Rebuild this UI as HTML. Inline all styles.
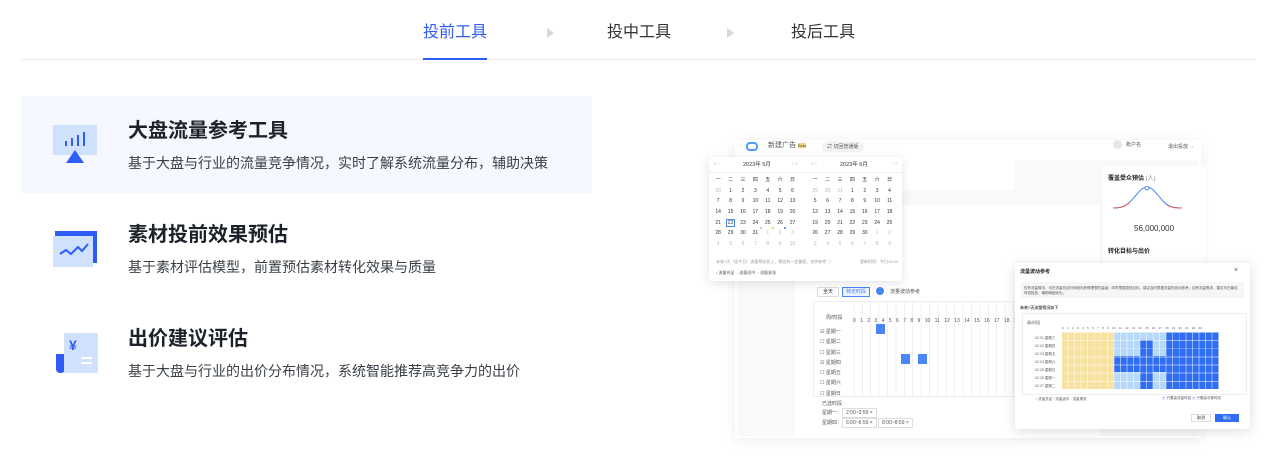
<!DOCTYPE html>
<html><head><meta charset="utf-8"><style>
*{margin:0;padding:0;box-sizing:border-box}
body{width:1268px;height:461px;background:#fff;position:relative;overflow:hidden;font-family:"Liberation Sans","Noto Sans CJK SC",sans-serif;color:#1f2329}
.a{position:absolute}
.tab{position:absolute;top:22px;font-size:16px;line-height:22px;color:#333}
.arrow{position:absolute;top:28px;width:0;height:0;border-left:7px solid #d6d8dc;border-top:5px solid transparent;border-bottom:5px solid transparent}
.t{position:absolute;left:128px;font-size:20px;font-weight:bold;color:#1d2129;line-height:28px}
.d{position:absolute;left:128px;font-size:14px;color:#3a3f47;line-height:20px}
.sm{font-size:5px;color:#555;line-height:6px}
.cal{position:absolute;font-size:5px;color:#333;display:grid;grid-template-columns:repeat(7,12.4px);grid-auto-rows:10.7px;text-align:center;line-height:6px}
.cal .g{color:#bbb}
</style></head><body>
<div class="tab" style="left:423px;color:#2f5cf5">投前工具</div>
<div class="arrow" style="left:547px"></div>
<div class="tab" style="left:607px">投中工具</div>
<div class="arrow" style="left:727px"></div>
<div class="tab" style="left:791px">投后工具</div>
<div class="a" style="left:20px;top:59px;width:1236px;height:1px;background:#eceef2"></div>
<div class="a" style="left:423px;top:58px;width:64px;height:2px;background:#2f5cf5"></div>

<div class="a" style="left:21px;top:96px;width:571px;height:97px;background:#f5f8fe"></div>
<div class="a" style="left:53px;top:125px;width:44px;height:30px;background:#cfe1fd"></div>
<div class="a" style="left:65px;top:141px;width:2px;height:5px;background:#2f5cf5"></div>
<div class="a" style="left:71px;top:138px;width:2px;height:8px;background:#2f5cf5"></div>
<div class="a" style="left:77px;top:135px;width:2px;height:11px;background:#2f5cf5"></div>
<div class="a" style="left:83px;top:132px;width:2px;height:14px;background:#2f5cf5"></div>
<div class="a" style="left:66px;top:150px;width:0;height:0;border-left:9px solid transparent;border-right:9px solid transparent;border-bottom:13px solid #2f5cf5"></div>
<div class="t" style="top:117px">大盘流量参考工具</div>
<div class="d" style="top:153px">基于大盘与行业的流量竞争情况，实时了解系统流量分布，辅助决策</div>
<div class="a" style="left:55px;top:231px;width:42px;height:32px;background:#2f5cf5"></div>
<div class="a" style="left:53px;top:236px;width:40px;height:31px;background:#cfe1fd"></div>
<svg class="a" style="left:58px;top:242px" width="32" height="16"><polyline points="2,12 8,8 13,12 20,5 24,9 30,2" fill="none" stroke="#2f5cf5" stroke-width="2"/></svg>
<div class="t" style="top:221px">素材投前效果预估</div>
<div class="d" style="top:257px">基于素材评估模型，前置预估素材转化效果与质量</div>
<div class="a" style="left:56px;top:354px;width:9px;height:19px;background:#2f5cf5;border-radius:0 0 4px 4px"></div>
<div class="a" style="left:64px;top:333px;width:34px;height:40px;background:#cfe1fd;border-radius:0 2px 2px 0"></div>
<div class="a" style="left:69px;top:337px;font-size:14px;font-weight:bold;color:#2f5cf5;line-height:16px">¥</div>
<div class="a" style="left:81px;top:357px;width:11px;height:2px;background:#fff"></div>
<div class="a" style="left:81px;top:362px;width:11px;height:2px;background:#fff"></div>
<div class="t" style="top:325px">出价建议评估</div>
<div class="d" style="top:361px">基于大盘与行业的出价分布情况，系统智能推荐高竞争力的出价</div>

<div class="a" style="left:735px;top:140px;width:466px;height:298px;background:#fff;box-shadow:0 2px 12px rgba(0,0,0,.08)"></div>
<div class="a" style="left:737px;top:160px;width:462px;height:276px;background:#f8f9fa"></div>
<div class="a" style="left:795px;top:205px;width:305px;height:231px;background:#fff"></div>
<div class="a" style="left:900px;top:160px;width:115px;height:30px;background:#fff"></div>
<div class="a" style="left:746px;top:142px;width:12px;height:9px;border:2px solid #4d9ef5;border-radius:4px"></div>
<div class="a sm" style="left:768px;top:143px;font-size:7px">新建广告 <span style="background:#f5d67a;font-size:4px">Beta</span></div>
<div class="a sm" style="left:822px;top:141px;width:42px;height:11px;background:#f2f3f5;border-radius:5px;padding:3px 5px">⇄ 切回普通版</div>
<div class="a" style="left:1113px;top:140px;width:9px;height:9px;border-radius:50%;background:#e5e6eb"></div>
<div class="a sm" style="left:1126px;top:142px">账户名</div>
<div class="a sm" style="left:1168px;top:144px">退出投放 →</div>
<div class="a" style="left:1103px;top:166px;width:103px;height:100px;background:#fff;border-radius:3px"></div>
<div class="a" style="left:1108px;top:173px;font-size:6px;color:#222;font-weight:bold">覆盖受众预估 <span style="font-weight:normal;color:#888">(人)</span></div>
<svg class="a" style="left:1112px;top:186px" width="72" height="24"><path d="M1,22 C15,22 18,16 25,8 C28,4 32,1 35,1 C40,1 45,8 50,14 C55,20 60,22 70,22" fill="none" stroke="#4a86f5" stroke-width="1"/><path d="M1,22 C10,22 14,20 18,16" fill="none" stroke="#e75a4d" stroke-width="1"/><path d="M55,19 C60,22 64,22 70,22" fill="none" stroke="#e75a4d" stroke-width="1"/><circle cx="35" cy="2" r="2" fill="#fff" stroke="#4a86f5"/></svg>
<div class="a" style="left:1134px;top:224px;font-size:8px;color:#333">56,000,000</div>
<div class="a" style="left:1108px;top:246px;font-size:6px;color:#222;font-weight:bold">转化目标与出价</div>
<div class="a" style="left:817px;top:287px;width:22px;height:10px;border:1px solid #ddd;font-size:5px;text-align:center;line-height:8px">全天</div>
<div class="a" style="left:842px;top:287px;width:28px;height:10px;border:1px solid #4a86f5;background:#eef4ff;font-size:5px;text-align:center;line-height:8px;color:#4a86f5">特定时段</div>
<div class="a" style="left:876px;top:287px;width:8px;height:8px;border-radius:50%;background:#4a86f5"></div>
<div class="a sm" style="left:890px;top:289px">流量波动参考</div>
<div class="a" style="left:813px;top:301px;width:210px;height:96px;border:1px solid #eee;background:repeating-linear-gradient(90deg,transparent 0 7.4px,#f0f0f0 7.4px 8.4px) 32px 0/178px 100% no-repeat,#fff"></div>
<div class="a sm" style="left:826px;top:315px">周/时段</div>
<div class="a sm" style="left:853px;top:318px;word-spacing:3px">0 1 2 3 4 5 6 7 8 9 10 11 12 13 14 15 16 17 18 19</div>
<div class="a sm" style="left:820px;top:327px;line-height:10.3px">☑ 星期一<br>☐ 星期二<br>☐ 星期三<br>☑ 星期四<br>☐ 星期五<br>☐ 星期六<br>☐ 星期日</div>
<div class="a" style="left:876px;top:324px;width:9px;height:10px;background:#4a86f5"></div>
<div class="a" style="left:901px;top:354px;width:9px;height:10px;background:#4a86f5"></div>
<div class="a" style="left:918px;top:354px;width:9px;height:10px;background:#4a86f5"></div>
<div class="a sm" style="left:822px;top:401px">已选时段</div>
<div class="a sm" style="left:822px;top:410px">星期一：<span style="border:1px solid #ddd;padding:1px 3px">2:00~3:59 ×</span></div>
<div class="a sm" style="left:822px;top:420px">星期四：<span style="border:1px solid #ddd;padding:1px 3px">6:00~6:59 ×</span> <span style="border:1px solid #ddd;padding:1px 3px">8:00~8:59 ×</span></div>
<div class="a" style="left:709px;top:157px;width:193px;height:124px;background:#fff;border-radius:3px;box-shadow:0 2px 10px rgba(0,0,0,.12)"></div>
<div class="a" style="left:709px;top:172px;width:193px;height:1px;background:#f0f0f0"></div>
<div class="a" style="left:743px;top:160px;font-size:5.5px;color:#333">2023年 5月</div>
<div class="a" style="left:840px;top:160px;font-size:5.5px;color:#333">2023年 6月</div>
<div class="a" style="left:714px;top:161px;font-size:5px;color:#bbb">« ‹</div>
<div class="a" style="left:792px;top:161px;font-size:5px;color:#bbb">› »</div>
<div class="a" style="left:811px;top:161px;font-size:5px;color:#bbb">« ‹</div>
<div class="a" style="left:892px;top:161px;font-size:5px;color:#bbb">› »</div>
<div class="cal" style="left:712px;top:177px">
<span>一</span><span>二</span><span>三</span><span>四</span><span>五</span><span>六</span><span>日</span>
<span class="g">30</span><span>1</span><span>2</span><span>3</span><span>4</span><span>5</span><span>6</span>
<span>7</span><span>8</span><span>9</span><span>10</span><span>11</span><span>12</span><span>13</span>
<span>14</span><span>15</span><span>16</span><span>17</span><span>18</span><span>19</span><span>20</span>
<span>21</span><span><span style="outline:1px solid #4a86f5;padding:0 1px">22</span></span><span>23</span><span>24</span><span>25</span><span>26</span><span>27</span>
<span>28</span><span>29</span><span>30</span><span>31</span><span class="g">1</span><span class="g">2</span><span class="g">3</span>
<span class="g">4</span><span class="g">5</span><span class="g">6</span><span class="g">7</span><span class="g">8</span><span class="g">9</span><span class="g">10</span>
</div>
<div class="cal" style="left:809px;top:177px">
<span>一</span><span>二</span><span>三</span><span>四</span><span>五</span><span>六</span><span>日</span>
<span class="g">29</span><span class="g">30</span><span class="g">31</span><span>1</span><span>2</span><span>3</span><span>4</span>
<span>5</span><span>6</span><span>7</span><span>8</span><span>9</span><span>10</span><span>11</span>
<span>12</span><span>13</span><span>14</span><span>15</span><span>16</span><span>17</span><span>18</span>
<span>19</span><span>20</span><span>21</span><span>22</span><span>23</span><span>24</span><span>25</span>
<span>26</span><span>27</span><span>28</span><span>29</span><span>30</span><span class="g">1</span><span class="g">2</span>
<span class="g">3</span><span class="g">4</span><span class="g">5</span><span class="g">6</span><span class="g">7</span><span class="g">8</span><span class="g">9</span>
</div>
<div class="a" style="left:760px;top:227px;width:2px;height:2px;border-radius:50%;background:#9cc4f8"></div>
<div class="a" style="left:772px;top:227px;width:2px;height:2px;border-radius:50%;background:#f5c542"></div>
<div class="a" style="left:784px;top:227px;width:2px;height:2px;border-radius:50%;background:#2f6df3"></div>
<div class="a sm" style="left:716px;top:259px;color:#999;font-size:4px">未来7天（含今日）流量预估如上，预估有一定偏差，仅供参考 ⓘ</div>
<div class="a sm" style="left:860px;top:259px;color:#999;font-size:4px">更新时间：今日10:00</div>
<div class="a sm" style="left:716px;top:270px;font-size:4px"><span style="color:#4a86f5">•</span> 流量充足 &nbsp;<span style="color:#9cc4f8">•</span> 流量适中 &nbsp;<span style="color:#f5c542">•</span> 流量紧张</div>
<div class="a" style="left:1015px;top:263px;width:235px;height:166px;background:#fff;border-radius:3px;box-shadow:0 2px 12px rgba(0,0,0,.14)"></div>
<div class="a sm" style="left:1020px;top:269px;font-weight:bold;color:#222">流量波动参考</div>
<div class="a sm" style="left:1234px;top:268px;font-size:7px">×</div>
<div class="a" style="left:1021px;top:282px;width:223px;height:16px;background:#f5f6f8"></div>
<div class="a sm" style="left:1024px;top:286px;width:215px;font-size:3.5px;line-height:5px;color:#555;overflow:hidden;height:11px">仅有流量情况，可在流量充足时间段内获得理想的量级；同时根据投放目标，建议及时根据流量的波动参考；如有流量需求，建议可在最佳时段投放，辅助精细优化。</div>
<div class="a sm" style="left:1020px;top:305px;font-size:4px;font-weight:bold">未来7天流量情况如下</div>
<div class="a" style="left:1022px;top:313px;width:225px;height:82px;border:1px solid #eee"></div>
<div class="a sm" style="left:1027px;top:320px;font-size:4px">周/时段</div>
<div class="a sm" style="left:1035px;top:334px;font-size:3.5px;line-height:8px">02-21 星期三<br>02-22 星期四<br>02-23 星期五<br>02-24 星期六<br>02-25 星期日<br>02-26 星期一<br>02-27 星期二</div>
<div class="a" style="left:1062px;top:332px;width:157px;height:57px;background:linear-gradient(90deg,#f8e2a0 0 52px,#b5d8fb 52px 104px,#2f6df3 104px)"></div>
<div class="a" style="left:1140px;top:340px;width:13px;height:49px;background:#2f6df3"></div>
<div class="a" style="left:1114px;top:356px;width:52px;height:16px;background:#2f6df3"></div>
<div class="a" style="left:1062px;top:332px;width:157px;height:57px;background:repeating-linear-gradient(90deg,transparent 0 5.6px,rgba(255,255,255,.5) 5.6px 6.54px),repeating-linear-gradient(0deg,transparent 0 7.2px,rgba(255,255,255,.5) 7.2px 8.14px)"></div>
<div class="a sm" style="left:1062px;top:325px;font-size:3px;word-spacing:2.5px;color:#555">0 1 2 3 4 5 6 7 8 9 10 11 12 13 14 15 16 17 18 19 20 21 22 23</div>
<div class="a sm" style="left:1036px;top:396px;font-size:3.5px"><span style="color:#4a86f5">•</span> 流量充足 <span style="color:#9cc4f8">•</span> 流量适中 <span style="color:#f5c542">•</span> 流量紧张</div>
<div class="a sm" style="left:1162px;top:395px;font-size:3.5px"><span style="color:#4a86f5">▣</span> 只看高流量时段 <span style="color:#4a86f5">▣</span> 只看高中等时段</div>
<div class="a" style="left:1191px;top:414px;width:20px;height:8px;border:1px solid #ddd;font-size:4px;text-align:center;line-height:6px">取消</div>
<div class="a" style="left:1215px;top:414px;width:24px;height:8px;background:#2f6df3;color:#fff;font-size:4px;text-align:center;line-height:8px">确认</div>
</body></html>
